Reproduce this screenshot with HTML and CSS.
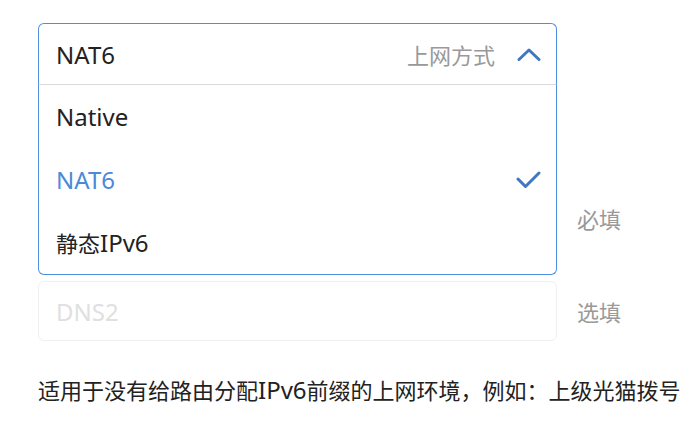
FILE: index.html
```html
<!DOCTYPE html>
<html lang="zh-CN">
<head>
  <meta charset="UTF-8">
  <meta name="viewport" content="width=device-width, initial-scale=1.0">
  <title>IPv6 设置</title>
  <link rel="stylesheet" href="styles.css">
</head>
<body>
  <main class="form">
    <div class="row row-select">
      <div class="select open">
        <div class="select-head">
          <span class="select-value latin">NAT6</span>
          <span class="select-label">上网方式</span>
          <svg class="chevron" width="24" height="13" viewBox="0 0 24 13">
            <polyline points="2,11.5 12,2 22,11.5" fill="none" stroke="#3f78bf" stroke-width="3" stroke-linecap="round" stroke-linejoin="round"/>
          </svg>
        </div>
        <ul class="select-menu">
          <li class="option"><span class="latin">Native</span></li>
          <li class="option selected"><span class="latin">NAT6</span>
            <svg class="check" width="25" height="18" viewBox="0 0 25 18">
              <polyline points="2,8 9.5,15.5 23,2" fill="none" stroke="#3f78bf" stroke-width="3" stroke-linecap="round" stroke-linejoin="round"/>
            </svg>
          </li>
          <li class="option"><span>静态<span class="latin">IPv6</span></span></li>
        </ul>
      </div>
    </div>
    <div class="row">
      <input class="field" type="text" placeholder="IPv6地址">
      <span class="hint"></span>
    </div>
    <div class="row">
      <input class="field" type="text" placeholder="DNS1">
      <span class="hint">必填</span>
    </div>
    <div class="row">
      <input class="field" type="text" placeholder="DNS2">
      <span class="hint">选填</span>
    </div>
    <p class="note">适用于没有给路由分配<span class="latin">IPv6</span>前缀的上网环境，例如：上级光猫拨号</p>
  </main>
</body>
</html>
```

FILE: styles.css
```css
body {
  margin: 0;
  background-color: #fff;
  font-family: "Noto Sans", "Noto Sans CJK SC", sans-serif;
  color: #222;
}
.latin {
  font-size: 24px;
}
.form {
  padding: 23px 0 0 38px;
  display: flex;
  flex-direction: column;
}
.row {
  display: flex;
  align-items: center;
  margin-bottom: 33px;
}
.row-select {
  position: relative;
  z-index: 2;
  margin-bottom: 10px;
}
.select {
  position: relative;
  width: 519px;
}
.select-head {
  box-sizing: border-box;
  height: 62px;
  display: flex;
  align-items: center;
  padding: 0 15px 0 17px;
  border: 1.5px solid #4d8fdc;
  border-radius: 6px;
  background-color: #fff;
}
.select.open .select-head {
  border-bottom: 1px solid #d9d9d9;
  border-radius: 6px 6px 0 0;
}
.select-value {
  flex: 1;
}
.select-label {
  font-size: 22px;
  color: #999;
  margin-right: 22px;
}
.chevron {
  display: block;
}
.select-menu {
  position: absolute;
  top: 62px;
  left: 0;
  right: 0;
  margin: 0;
  padding: 0;
  list-style: none;
  background-color: #fff;
  border: 1.5px solid #4d8fdc;
  border-top: none;
  border-radius: 0 0 6px 6px;
}
.option {
  height: 63px;
  display: flex;
  align-items: center;
  justify-content: space-between;
  padding: 0 15px 0 17px;
  font-size: 22px;
}
.option.selected {
  color: #4a8ad8;
}
.check {
  display: block;
}
.field {
  box-sizing: border-box;
  width: 519px;
  height: 60px;
  padding: 0 17px;
  border: 1px solid #f0f0f0;
  border-radius: 6px;
  font-family: inherit;
  font-size: 24px;
  color: #222;
  outline: none;
}
.field::placeholder {
  color: #e0e0e0;
}
.hint {
  margin-left: 20px;
  font-size: 22px;
  color: #999;
}
.note {
  margin: 1px 0 0;
  font-size: 22px;
  line-height: 30px;
  color: #222;
}
```
